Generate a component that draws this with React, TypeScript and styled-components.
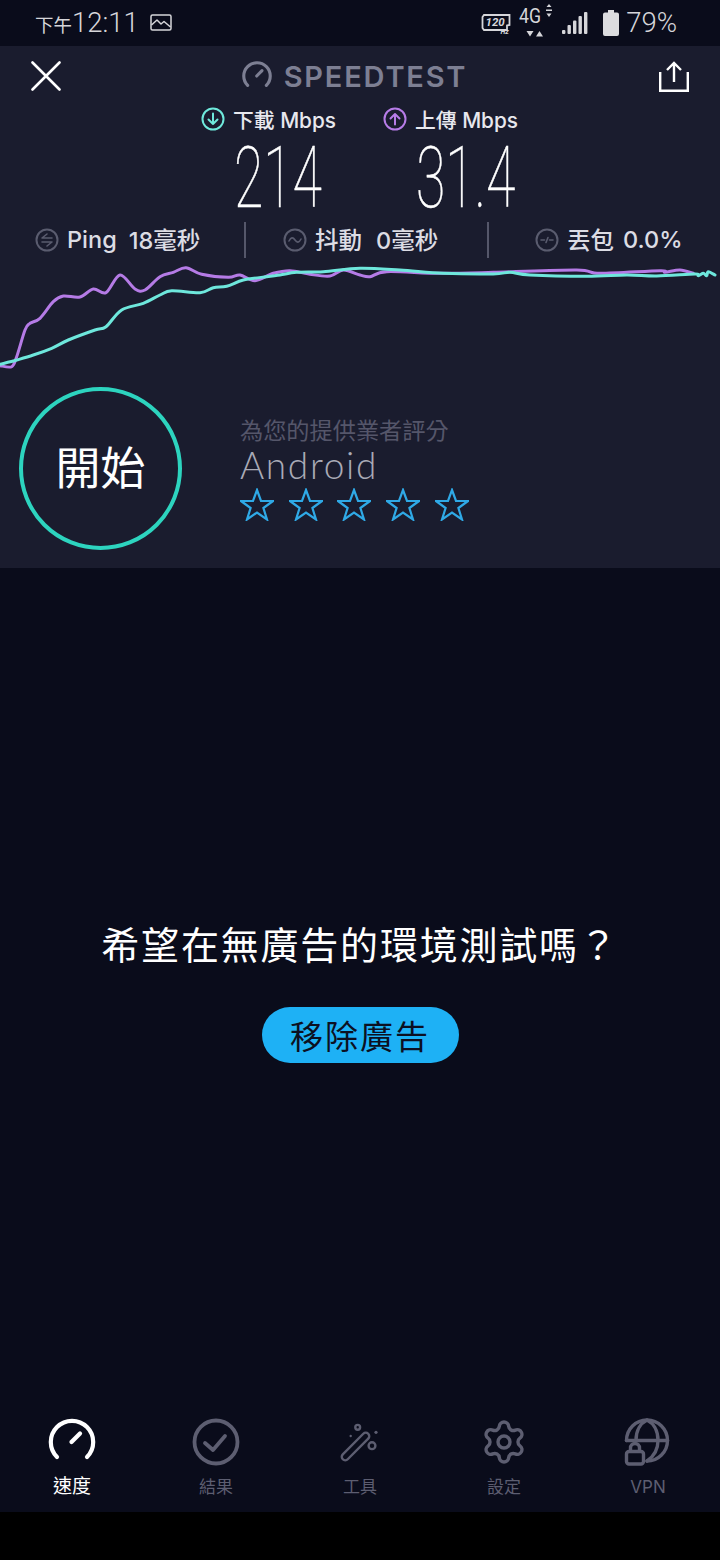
import * as React from "react";
import styled, { createGlobalStyle } from "styled-components";
import { Settings } from "lucide-react";

const CJK = `"Noto Sans CJK TC", "Noto Sans CJK SC", sans-serif`;
const FONT = `Inter, ${CJK}`;

const Global = createGlobalStyle`
  html, body {
    margin: 0;
    background: #000;
    font-family: ${FONT};
  }
`;

const Page = styled.div`
  width: 720px;
  height: 1560px;
  display: flex;
  flex-direction: column;
  overflow: hidden;
  background: #0a0c1b;
`;

const StatusBar = styled.div`
  height: 46px;
  flex: none;
  display: flex;
  align-items: center;
  justify-content: space-between;
  padding: 0 43px 0 35px;
  box-sizing: border-box;
  color: #d6d6da;
`;

const StatusGroup = styled.div<{ $gap: number }>`
  display: flex;
  align-items: center;
  gap: ${(p) => p.$gap}px;
`;

const StatusAmPm = styled.span`
  font: 400 18.5px ${CJK};
  margin-top: 5px;
`;

const StatusText = styled.span`
  font: 300 27.5px Roboto, sans-serif;
  line-height: 30px;
`;

const Panel = styled.section`
  height: 522px;
  flex: none;
  background: #1a1c2e;
  display: flex;
  flex-direction: column;
`;

const TopBar = styled.div`
  height: 60px;
  flex: none;
  display: flex;
  align-items: center;
  justify-content: space-between;
  padding: 0 31px 0 31px;
`;

const Brand = styled.div`
  display: flex;
  align-items: center;
  gap: 12px;
  margin-right: 11px;
  color: #7d7f93;
`;

const BrandName = styled.span`
  font: 600 29px Inter, sans-serif;
  letter-spacing: 1.8px;
`;

const SpeedGrid = styled.div`
  display: grid;
  grid-template-columns: 182px 182px;
  padding-left: 201px;
`;

const SpeedCol = styled.div`
  display: flex;
  flex-direction: column;
`;

const Legend = styled.div`
  height: 28px;
  display: flex;
  align-items: center;
  gap: 8px;
  font: 500 20.8px ${FONT};
  color: #e8e8ee;
  white-space: nowrap;
  margin-top: -1px;
`;

const SpeedValue = styled.div`
  height: 82px;
  margin: 3px 0 0 33px;
  font: 100 85px/85px Roboto, sans-serif;
  -webkit-text-stroke: 0.5px #fff;
  color: #fff;
  transform: scaleX(0.63);
  transform-origin: left center;
  white-space: nowrap;
`;

const StatsRow = styled.div`
  height: 44px;
  flex: none;
  display: grid;
  grid-template-columns: 244px 243px 233px;
  align-items: center;
`;

const Stat = styled.div<{ $inset: number; $divider?: boolean }>`
  height: 36px;
  display: flex;
  align-items: center;
  padding-left: ${(p) => p.$inset}px;
  border-left: ${(p) => (p.$divider ? "2px solid #55576a" : "2px solid transparent")};
  box-sizing: border-box;
  font: 500 23.5px ${FONT};
  color: #dcdce4;
  white-space: nowrap;
`;

const StatText = styled.span`
  margin-top: -2px;
`;

const StatLabel = styled(StatText)<{ $gap: number }>`
  margin-left: 8px;
  margin-right: ${(p) => p.$gap}px;
`;

const Chart = styled.svg`
  display: block;
  width: 720px;
  height: 110px;
  flex: none;
`;

const TestRow = styled.div`
  flex: 1;
  display: flex;
  align-items: flex-start;
  padding: 15px 0 0 19px;
`;

const StartButton = styled.div`
  width: 163px;
  height: 163px;
  flex: none;
  box-sizing: border-box;
  border: 4px solid #2dd4bf;
  border-radius: 50%;
  display: flex;
  align-items: center;
  justify-content: center;
  padding-bottom: 6px;
  font: 400 45px ${CJK};
  color: #fff;
`;

const Rating = styled.div`
  margin: 24px 0 0 58px;
  display: flex;
  flex-direction: column;
`;

const RatingTitle = styled.div`
  font: 400 23.2px/36px ${CJK};
  color: #55566a;
`;

const Provider = styled.div`
  font: 300 37px/36px Lato, sans-serif;
  letter-spacing: 1.7px;
  color: #a9aab6;
`;

const Stars = styled.div`
  display: flex;
  gap: 14.7px;
  margin-top: 5px;
`;

const Promo = styled.main`
  flex: 1;
  display: flex;
  flex-direction: column;
  align-items: center;
  padding-top: 348px;
`;

const PromoText = styled.div`
  font: 400 38px/54px ${CJK};
  letter-spacing: 1.8px;
  color: #fff;
`;

const PromoButton = styled.div`
  margin-top: 37px;
  width: 197px;
  height: 56px;
  border-radius: 28px;
  background: #1eb1f5;
  display: flex;
  align-items: center;
  justify-content: center;
  font: 400 33px ${CJK};
  letter-spacing: 2px;
  color: #0c1022;
`;

const TabBar = styled.nav`
  height: 112px;
  flex: none;
  display: grid;
  grid-template-columns: repeat(5, 144px);
  padding-top: 18px;
  box-sizing: border-box;
`;

const Tab = styled.div<{ $active?: boolean }>`
  display: flex;
  flex-direction: column;
  align-items: center;
  gap: 7px;
  color: ${(p) => (p.$active ? "#fff" : "#5d5e71")};
  font-size: ${(p) => (p.$active ? 19 : 17)}px;
`;

const TabLabel = styled.span`
  font-family: ${FONT};
  line-height: 28px;
`;

const Gesture = styled.div`
  height: 48px;
  flex: none;
  background: #000;
`;

type Pt = [number, number];

// smooth line through points (catmull-rom to bezier)
const smooth = (pts: Pt[]) => {
  let d = `M${pts[0][0]} ${pts[0][1]}`;
  for (let i = 0; i < pts.length - 1; i++) {
    const p0 = pts[Math.max(i - 1, 0)];
    const p1 = pts[i];
    const p2 = pts[i + 1];
    const p3 = pts[Math.min(i + 2, pts.length - 1)];
    const c1x = p1[0] + (p2[0] - p0[0]) / 6;
    const c1y = p1[1] + (p2[1] - p0[1]) / 6;
    const c2x = p2[0] - (p3[0] - p1[0]) / 6;
    const c2y = p2[1] - (p3[1] - p1[1]) / 6;
    d += ` C${c1x.toFixed(1)} ${c1y.toFixed(1)} ${c2x.toFixed(1)} ${c2y.toFixed(1)} ${p2[0].toFixed(1)} ${p2[1].toFixed(1)}`;
  }
  return d;
};

// points read off the picture, left half then right half, in 3x crop units
const left = (z: Pt[]): Pt[] => z.map(([x, y]) => [x / 3, y / 3 - 7]);
const right = (z: Pt[]): Pt[] => z.map(([x, y]) => [360 + x / 3, y / 3 - 7]);

const purple = smooth([
  ...left([[0, 332], [35, 335], [50, 305], [75, 225], [90, 205], [120, 190], [160, 140], [190, 123], [240, 126], [280, 102], [318, 113], [360, 60], [405, 102], [435, 105], [480, 65], [520, 52], [558, 38], [605, 58], [685, 67], [720, 60], [765, 77], [820, 55], [870, 47], [930, 58], [990, 63], [1030, 45]]),
  ...right([[0, 60], [30, 65], [80, 50], [240, 55], [400, 52], [650, 45], [720, 55], [900, 47], [915, 52], [960, 45], [1000, 55]]),
]);

const teal = smooth([
  ...left([[0, 328], [50, 315], [100, 300], [155, 280], [205, 255], [285, 225], [318, 215], [365, 165], [430, 145], [480, 120], [515, 107], [600, 113], [640, 98], [680, 94], [730, 75], [800, 65], [840, 60], [890, 52], [970, 50]]),
  ...right([[0, 40], [120, 45], [250, 55], [400, 57], [450, 52], [510, 60], [680, 64], [800, 60], [890, 63], [1005, 57], [1015, 62], [1030, 55], [1040, 62], [1045, 50], [1065, 60]]),
]);

const ArrowBadge = ({ color, up }: { color: string; up?: boolean }) => (
  <svg width="24" height="24" viewBox="0 0 24 24" fill="none" stroke={color} strokeWidth="2" strokeLinecap="round" strokeLinejoin="round">
    <circle cx="12" cy="12" r="10.5" />
    {up ? <path d="M12 17.5V7M7.5 11.5 12 7l4.5 4.5" /> : <path d="M12 6.5V17M7.5 12.5 12 17l4.5-4.5" />}
  </svg>
);

const StatIcon = ({ d }: { d: string }) => (
  <svg width="24" height="24" viewBox="0 0 24 24" fill="none" stroke="#5a5c6f" strokeWidth="2" strokeLinecap="round" strokeLinejoin="round">
    <circle cx="12" cy="12" r="10.5" />
    <path d={d} strokeWidth="1.6" />
  </svg>
);

const Star = () => (
  <svg width="34" height="33" viewBox="0 0 34 33" fill="none" stroke="#2fa9e6" strokeWidth="2.2" strokeLinejoin="miter">
    <path d="M17 2 21 13H33L23.4 20 27 31.5 17 24.5 7 31.5 10.6 20 1 13H13Z" />
  </svg>
);

const GaugeIcon = ({ size, stroke }: { size: number; stroke: number }) => (
  <svg width={size} height={size} viewBox="0 0 48 48" fill="none" stroke="currentColor" strokeWidth={stroke} strokeLinecap="round">
    <path d="M9 39A21.2 21.2 0 1 1 39 39" />
    <path d="M23.5 24 32 15.5" />
  </svg>
);

const App = () => (
  <Page>
    <Global />
    <StatusBar>
      <StatusGroup $gap={11}>
        <span>
          <StatusAmPm>下午</StatusAmPm>
          <StatusText>12:11</StatusText>
        </span>
        <svg width="22" height="18" viewBox="0 0 22 18" fill="none" stroke="#d6d6da" strokeWidth="1.5" strokeLinejoin="round">
          <rect x="1" y="1" width="20" height="15" rx="1.5" />
          <path d="M1.5 11 7 6l4 4 3-2.5L20.5 13" />
        </svg>
      </StatusGroup>
      <StatusGroup $gap={7}>
        <svg width="30" height="24" viewBox="0 0 30 24" fill="none" stroke="#d6d6da" style={{ marginRight: 1 }}>
          <path d="M3 4H28.5V14L26 14.5V19H3L1.5 17V6Z" strokeWidth="1.8" />
          <text x="4.5" y="15" fontFamily="Roboto, sans-serif" fontStyle="italic" fontWeight="700" fontSize="11.5" fill="#d6d6da" stroke="none">120</text>
          <text x="19.5" y="23" fontFamily="Roboto, sans-serif" fontStyle="italic" fontWeight="700" fontSize="7" fill="#d6d6da" stroke="none">Hz</text>
        </svg>
        <svg width="34" height="38" viewBox="0 0 34 38" fill="#d6d6da" style={{ marginTop: -2 }}>
          <text x="0" y="20" fontFamily="Roboto, sans-serif" fontSize="21" textLength="22" lengthAdjust="spacingAndGlyphs">4G</text>
          <path d="M27.5 4H32.5L30 1ZM27.5 10.5H32.5L30 14ZM27 6.5H33V8H27Z" />
          <path d="M7.5 28H14.5L11 33.5ZM17 33.5H24L20.5 28Z" />
        </svg>
        <svg width="28" height="24" viewBox="0 0 28 24" fill="#d6d6da" style={{ marginLeft: 1 }}>
          <rect x="1" y="19" width="3.4" height="4" rx="1" />
          <rect x="6.5" y="14" width="3.4" height="9" rx="1" />
          <rect x="12" y="9.5" width="3.4" height="13.5" rx="1" />
          <rect x="17.5" y="5" width="3.4" height="18" rx="1" />
          <rect x="23" y="1" width="3.4" height="22" rx="1" />
        </svg>
        <svg width="16" height="26" viewBox="0 0 16 26" fill="#dcdcdf" style={{ marginLeft: 7 }}>
          <path d="M5 0H11V2.5H14A2 2 0 0 1 16 4.5V24A2 2 0 0 1 14 26H2A2 2 0 0 1 0 24V4.5A2 2 0 0 1 2 2.5H5Z" />
        </svg>
        <StatusText>79%</StatusText>
      </StatusGroup>
    </StatusBar>

    <Panel>
      <TopBar>
        <svg width="30" height="30" viewBox="0 0 30 30" fill="none" stroke="#fff" strokeWidth="2.6" strokeLinecap="round">
          <path d="M1.5 1.5 28.5 28.5M28.5 1.5 1.5 28.5" />
        </svg>
        <Brand>
          <GaugeIcon size={30} stroke={5} />
          <BrandName>SPEEDTEST</BrandName>
        </Brand>
        <svg width="30" height="31" viewBox="0 0 30 31" fill="none" stroke="#fff" strokeWidth="2.4">
          <path d="M15 21V2M8 9 15 2 22 9" />
          <path d="M1.2 11V29.8H28.8V11" />
        </svg>
      </TopBar>

      <SpeedGrid>
        <SpeedCol>
          <Legend>
            <ArrowBadge color="#6fe9dc" />
            下載 Mbps
          </Legend>
          <SpeedValue>214</SpeedValue>
        </SpeedCol>
        <SpeedCol>
          <Legend>
            <ArrowBadge color="#b77ce8" up />
            上傳 Mbps
          </Legend>
          <SpeedValue>31.4</SpeedValue>
        </SpeedCol>
      </SpeedGrid>

      <StatsRow>
        <Stat $inset={33}>
          <StatIcon d="M17 10H7L12 6M7 14H17L12 18" />
          <StatLabel $gap={12}>Ping</StatLabel>
          <StatText>18毫秒</StatText>
        </Stat>
        <Stat $inset={37} $divider>
          <StatIcon d="M6 13C8 9 10 9 12 12S16 15 18 11" />
          <StatLabel $gap={14}>抖動</StatLabel>
          <StatText>0毫秒</StatText>
        </Stat>
        <Stat $inset={46} $divider>
          <StatIcon d="M6 12H9.5M11 14.5 13 9.5M14.5 12H18" />
          <StatLabel $gap={9}>丟包</StatLabel>
          <StatText>0.0%</StatText>
        </Stat>
      </StatsRow>

      <Chart viewBox="0 0 720 110" fill="none">
        <path d={purple} stroke="#b57be6" strokeWidth="3" strokeLinecap="round" />
        <path d={teal} stroke="#6ee7dc" strokeWidth="3" strokeLinecap="round" />
      </Chart>

      <TestRow>
        <StartButton>開始</StartButton>
        <Rating>
          <RatingTitle>為您的提供業者評分</RatingTitle>
          <Provider>Android</Provider>
          <Stars>
            {[0, 1, 2, 3, 4].map((i) => (
              <Star key={i} />
            ))}
          </Stars>
        </Rating>
      </TestRow>
    </Panel>

    <Promo>
      <PromoText>希望在無廣告的環境測試嗎？</PromoText>
      <PromoButton>移除廣告</PromoButton>
    </Promo>

    <TabBar>
      <Tab $active>
        <GaugeIcon size={48} stroke={4.2} />
        <TabLabel>速度</TabLabel>
      </Tab>
      <Tab>
        <svg width="48" height="48" viewBox="0 0 48 48" fill="none" stroke="currentColor" strokeWidth="3.8" strokeLinecap="round" strokeLinejoin="round">
          <circle cx="24" cy="24" r="21.5" />
          <path d="M13 25 21 32 33 18" />
        </svg>
        <TabLabel>結果</TabLabel>
      </Tab>
      <Tab>
        <svg width="48" height="48" viewBox="0 0 48 48" fill="none" stroke="currentColor" strokeWidth="2.4">
          <rect x="-3.5" y="-18" width="7" height="36" rx="3.5" transform="translate(19.5 28.5) rotate(45)" />
          <circle cx="21.7" cy="9.3" r="2.4" />
          <circle cx="36" cy="27.7" r="3.4" />
          <circle cx="40" cy="14.3" r="1.6" fill="currentColor" stroke="none" />
          <circle cx="14.7" cy="18" r="1.2" fill="currentColor" stroke="none" />
        </svg>
        <TabLabel>工具</TabLabel>
      </Tab>
      <Tab>
        <Settings size={48} strokeWidth={1.7} />
        <TabLabel>設定</TabLabel>
      </Tab>
      <Tab>
        <svg width="48" height="48" viewBox="0 0 48 48" fill="none" stroke="currentColor" strokeWidth="3.4" strokeLinecap="round" strokeLinejoin="round">
          <path d="M2.5 22.5A20.5 20.5 0 1 1 23 43" />
          <path d="M2.5 22.5H43.5" />
          <path d="M12 22.5C12 12 17 5 23 2 29 5 34 12 34 22.5 34 33 29 39 23 43" />
          <rect x="2.5" y="33.5" width="17" height="12.5" rx="2.5" />
          <path d="M6.5 33V30A4.5 4.5 0 0 1 15.5 30V33" />
        </svg>
        <TabLabel>VPN</TabLabel>
      </Tab>
    </TabBar>
    <Gesture />
  </Page>
);

export default App;
